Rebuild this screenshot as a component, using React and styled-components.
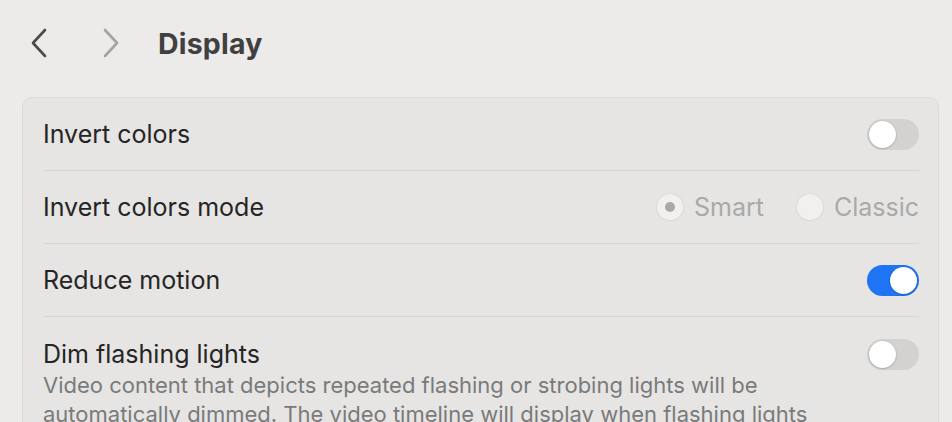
import styled, { createGlobalStyle } from 'styled-components'

const GlobalStyle = createGlobalStyle`
    html, body {
        margin: 0;
        padding: 0;
        background: #ecebea;
        font-family: Inter, "Liberation Sans", sans-serif;
        overflow: hidden;
    }
`

export default function App(){
    return <Page>
        <GlobalStyle/>
        <Header>
            <NavButton>
                <svg width="18" height="30" viewBox="0 0 18 30">
                    <path d="M15 2 L3 15 L15 28" fill="none" stroke="#4a4a4a" strokeWidth="2.6" strokeLinecap="round" strokeLinejoin="round"/>
                </svg>
            </NavButton>
            <NavButton>
                <svg width="18" height="30" viewBox="0 0 18 30">
                    <path d="M3 2 L15 15 L3 28" fill="none" stroke="#a3a3a3" strokeWidth="2.6" strokeLinecap="round" strokeLinejoin="round"/>
                </svg>
            </NavButton>
            <Title>Display</Title>
        </Header>
        <Card>
            <Row>
                <Label>Invert colors</Label>
                <Toggle/>
            </Row>
            <Row>
                <Label>Invert colors mode</Label>
                <RadioGroup>
                    <RadioOption><Radio $checked/> Smart</RadioOption>
                    <RadioOption><Radio/> Classic</RadioOption>
                </RadioGroup>
            </Row>
            <Row>
                <Label>Reduce motion</Label>
                <Toggle $on/>
            </Row>
            <Row $last $top>
                <TextBlock>
                    <Label>Dim flashing lights</Label>
                    <Description>
                        Video content that depicts repeated flashing or strobing lights will be
                        automatically dimmed. The video timeline will display when flashing lights
                        occur.
                    </Description>
                </TextBlock>
                <Toggle/>
            </Row>
        </Card>
    </Page>
}

const Page = styled.div`
    padding: 0 13px 0 22px;
`

const Header = styled.div`
    height: 86px;
    display: flex;
    align-items: center;
    padding-left: 8px;
`

const NavButton = styled.div`
    width: 18px;
    height: 30px;
    display: flex;
    margin-right: 54px;
    &:nth-child(2) {
        margin-right: 38px;
    }
`

const Title = styled.div`
    font-size: 28.5px;
    font-weight: 700;
    color: #404040;
    letter-spacing: 0.2px;
`

const Card = styled.div`
    margin-top: 11px;
    background: #e6e5e4;
    border: 1px solid #dcdbda;
    border-radius: 10px;
    padding: 0 19px 0 20px;
`

const Row = styled.div`
    display: flex;
    justify-content: space-between;
    align-items: ${p => p.$top ? 'flex-start' : 'center'};
    min-height: 73px;
    padding-top: ${p => p.$top ? '22px' : '0'};
    box-sizing: border-box;
    border-bottom: ${p => p.$last ? 'none' : '1px solid #d6d5d4'};
`

const TextBlock = styled.div`
    display: flex;
    flex-direction: column;
`

const Label = styled.div`
    font-size: 25px;
    color: #252525;
    line-height: 30px;
`

const Description = styled.div`
    margin-top: 2px;
    font-size: 22px;
    line-height: 29px;
    color: #7a7a7a;
    max-width: 800px;
`

const Toggle = styled.div`
    position: relative;
    flex: none;
    width: 52px;
    height: 31px;
    border-radius: 16px;
    background: ${p => p.$on ? '#1f74f3' : '#d3d2d1'};
    box-sizing: border-box;
    &::after {
        content: '';
        position: absolute;
        top: 2px;
        left: ${p => p.$on ? '23px' : '2px'};
        width: 27px;
        height: 27px;
        border-radius: 50%;
        background: #ffffff;
        box-shadow: 0 0.5px 2px rgba(0,0,0,0.3);
    }
`

const RadioGroup = styled.div`
    display: flex;
    gap: 33px;
`

const RadioOption = styled.div`
    display: flex;
    align-items: center;
    gap: 11px;
    font-size: 25px;
    color: #a9a9a9;
`

const Radio = styled.span`
    width: 26px;
    height: 26px;
    border-radius: 50%;
    background: #f1f0ef;
    box-shadow: 0 0 0 1px #dcdbda, 0 0.5px 1.5px rgba(0,0,0,0.12);
    display: flex;
    align-items: center;
    justify-content: center;
    &::after {
        content: '';
        width: 10px;
        height: 10px;
        border-radius: 50%;
        background: ${p => p.$checked ? '#a9a9a9' : 'transparent'};
    }
`
